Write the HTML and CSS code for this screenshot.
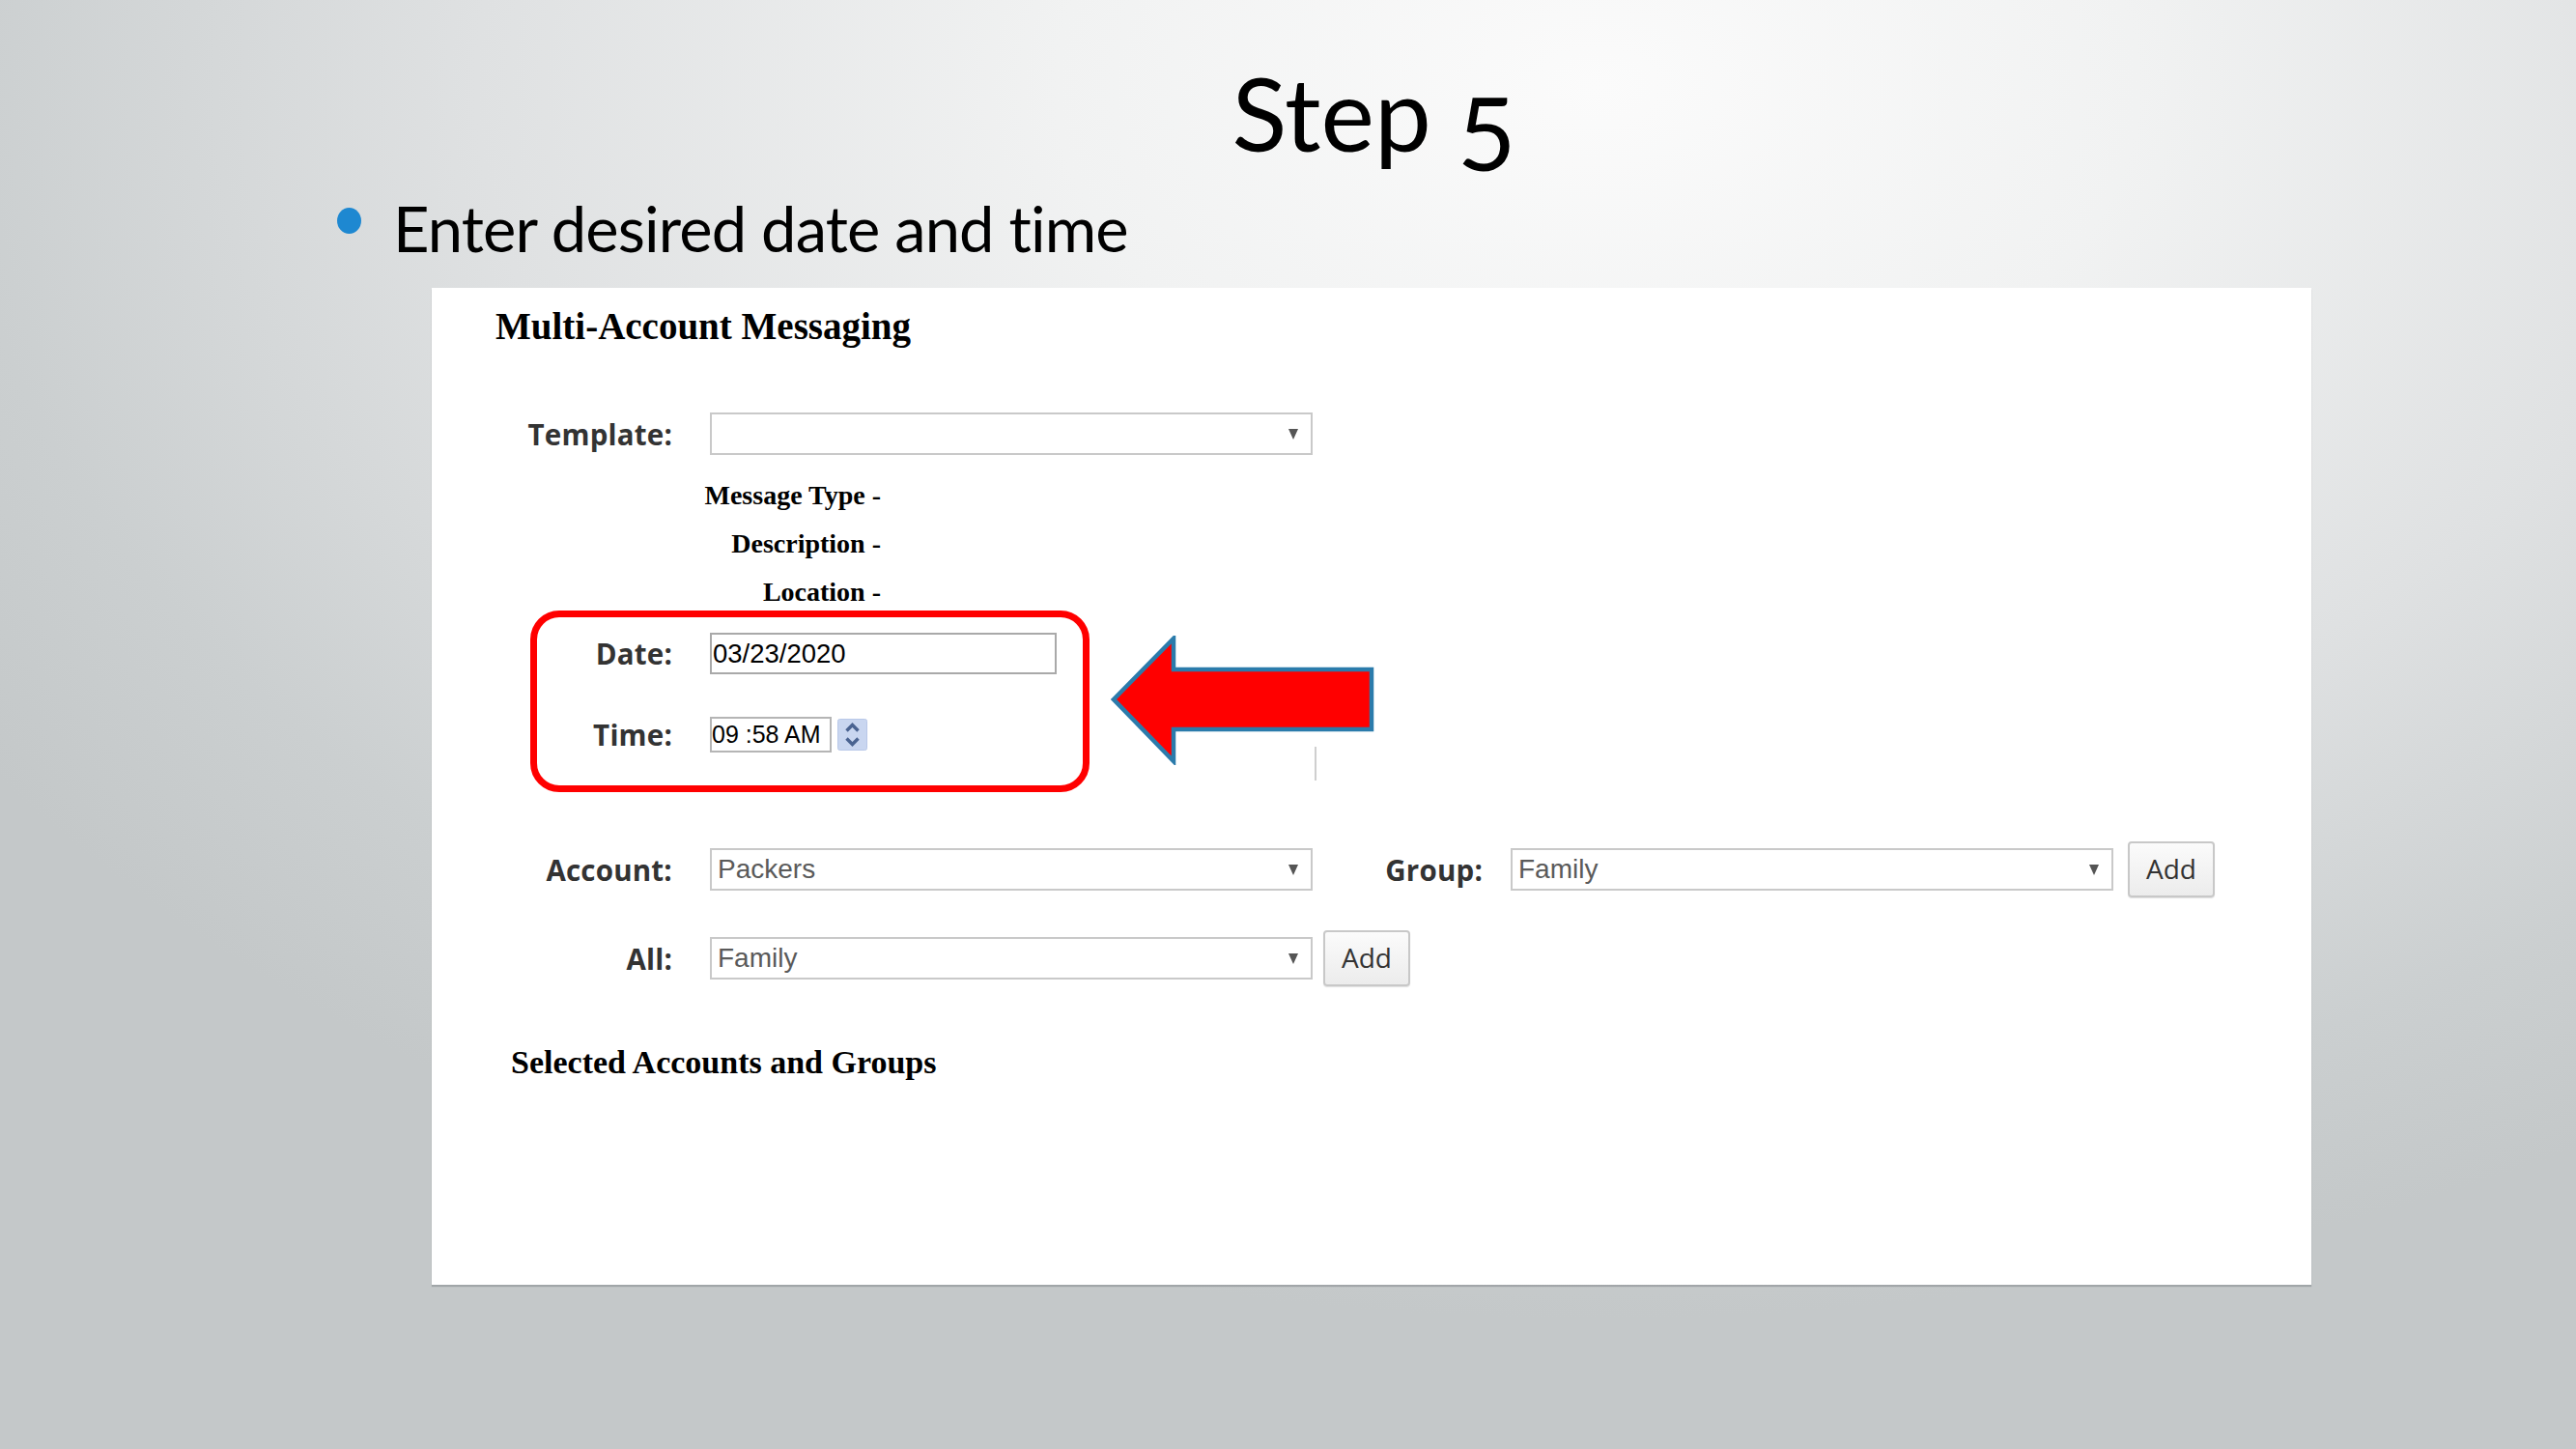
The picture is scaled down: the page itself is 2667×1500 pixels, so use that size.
FILE: index.html
```html
<!DOCTYPE html>
<html lang="en">
<head>
<meta charset="utf-8">
<title>Step 5</title>
<link rel="stylesheet" href="styles.css">
</head>
<body>
<div class="slide">
  <h1 class="title">Step <span class="onum">5</span></h1>
  <ul class="bullets">
    <li>Enter desired date and time</li>
  </ul>
  <div class="panel">
    <h2 class="panel-title">Multi-Account Messaging</h2>
    <div class="form">
      <div class="row row-template">
        <span class="label">Template:</span>
        <div class="select"><span class="select-text"></span><span class="caret"></span></div>
      </div>
      <div class="meta">
        <div>Message Type -</div>
        <div>Description -</div>
        <div>Location -</div>
      </div>
      <div class="row row-date">
        <span class="label">Date:</span>
        <div class="input input-date">03/23/2020</div>
      </div>
      <div class="row row-time">
        <span class="label">Time:</span>
        <div class="input input-time">09 :58 AM</div>
        <svg class="spinner" width="31" height="33" viewBox="0 0 31 33">
          <rect x="0.5" y="0.5" width="30" height="32" rx="2" fill="#c9d6f0" stroke="#b9c8e8"/>
          <path d="M9.5 12.5 L15.5 6.5 L21.5 12.5" fill="none" stroke="#4a6391" stroke-width="3.4" stroke-linejoin="miter"/>
          <path d="M9.5 20.5 L15.5 26.5 L21.5 20.5" fill="none" stroke="#4a6391" stroke-width="3.4" stroke-linejoin="miter"/>
        </svg>
        <span class="vline"></span>
      </div>
      <div class="row row-account">
        <span class="label">Account:</span>
        <div class="select"><span class="select-text">Packers</span><span class="caret"></span></div>
        <span class="label label-group">Group:</span>
        <div class="select select-group"><span class="select-text">Family</span><span class="caret"></span></div>
        <button class="btn btn-group">Add</button>
      </div>
      <div class="row row-all">
        <span class="label">All:</span>
        <div class="select"><span class="select-text">Family</span><span class="caret"></span></div>
        <button class="btn btn-all">Add</button>
      </div>
    </div>
    <h3 class="selected-title">Selected Accounts and Groups</h3>

    <div class="callout"></div>
    <svg class="arrow" width="276" height="134" viewBox="0 0 276 134">
      <polygon points="3,66 65,3 65,35 270,35 270,97 65,97 65,130" fill="#ff0000" stroke="#2b7bab" stroke-width="4.5" stroke-linejoin="miter"/>
    </svg>
  </div>
</div>
</body>
</html>
```

FILE: styles.css
```css
html, body {
  margin: 0;
  padding: 0;
}

body {
  background: #d8dbdc;
}

.slide {
  width: 2667px;
  height: 1500px;
  overflow: hidden;
  box-sizing: border-box;
  padding-top: 64px;
  background:
    radial-gradient(ellipse 75% 85% at 62% 6%, #fbfbfb 0%, #f1f2f2 28%, #dfe1e2 58%, #cbcfd0 85%, #c4c8c9 100%);
  font-family: "Lato", "Open Sans", sans-serif;
}

.title {
  margin: 0;
  height: 105px;
  padding-left: 178px;
  text-align: center;
  font-family: "Lato", sans-serif;
  font-weight: 400;
  font-size: 105px;
  line-height: 1;
  color: #000;
}

.onum {
  vertical-align: -20px;
}

.bullets {
  list-style: none;
  margin: 35px 0 0 0;
  padding: 0 0 0 349px;
}

.bullets li {
  display: flex;
  align-items: flex-start;
  font-family: "Lato", sans-serif;
  font-size: 65px;
  letter-spacing: -0.85px;
  line-height: 1;
  color: #000;
}

.bullets li::before {
  content: "";
  flex: none;
  width: 25px;
  height: 27px;
  margin-top: 11px;
  margin-right: 33px;
  border-radius: 50%;
  background: #1e88d1;
}

.panel {
  position: relative;
  margin: 29px 0 0 447px;
  width: 1946px;
  height: 1032px;
  box-sizing: border-box;
  padding-top: 20px;
  background: #fff;
  box-shadow: 0 2px 1px rgba(120, 125, 128, 0.45);
}

.panel-title {
  margin: 0;
  padding-left: 66px;
  font-family: "Liberation Serif", "Times New Roman", serif;
  font-weight: 700;
  font-size: 39px;
  line-height: 1;
  color: #000;
}

.form {
  margin-top: 70px;
  padding-left: 49px;
}

.row {
  display: flex;
  align-items: center;
}

.label {
  flex: none;
  width: 200px;
  margin-right: 39px;
  text-align: right;
  font-family: "Open Sans", sans-serif;
  font-weight: 700;
  font-size: 29.5px;
  letter-spacing: 0.2px;
  color: #333;
}

.row-template {
  height: 44px;
}

.select {
  flex: none;
  display: flex;
  align-items: center;
  justify-content: space-between;
  width: 624px;
  height: 44px;
  box-sizing: border-box;
  padding: 0 13px 0 6px;
  border: 2px solid #c9c9c9;
  background: #fff;
  font-family: "Liberation Sans", Arial, sans-serif;
  font-size: 28px;
  color: #5a5a5a;
}

.caret {
  flex: none;
  width: 0;
  height: 0;
  border-left: 5px solid transparent;
  border-right: 5px solid transparent;
  border-top: 11px solid #555;
}

.meta {
  margin-top: 17px;
  width: 416px;
  text-align: right;
  font-family: "Liberation Serif", "Times New Roman", serif;
  font-weight: 700;
  font-size: 28px;
  line-height: 50px;
  color: #000;
}

.row-date {
  margin-top: 17px;
  height: 43px;
}

.input {
  flex: none;
  box-sizing: border-box;
  display: flex;
  align-items: center;
  border: 2px solid #a9a9a9;
  background: #fff;
  font-family: "Liberation Sans", Arial, sans-serif;
  color: #000;
}

.input-date {
  width: 359px;
  height: 43px;
  padding-left: 1px;
  font-size: 27.5px;
}

.row-time {
  margin-top: 44px;
  height: 37px;
}

.input-time {
  width: 126px;
  height: 37px;
  padding-left: 0;
  font-size: 25px;
  overflow: hidden;
  white-space: nowrap;
  border-color: #b5b5b5;
}

.spinner {
  flex: none;
  display: block;
  margin-left: 6px;
}

.vline {
  flex: none;
  align-self: flex-start;
  width: 2px;
  height: 35px;
  margin-top: 31px;
  margin-left: 463px;
  background: #cfcfcf;
}

.row-account {
  margin-top: 92px;
  height: 58px;
}

.label-group {
  width: 136px;
  margin-left: 40px;
  margin-right: 29px;
}

.btn {
  flex: none;
  width: 90px;
  height: 58px;
  padding: 0 0 2px 0;
  box-sizing: border-box;
  border: 2px solid #c8c8c8;
  border-radius: 4px;
  background: linear-gradient(#fbfbfb, #ececec);
  box-shadow: 0 1px 1px rgba(0, 0, 0, 0.12);
  font-family: "Open Sans", sans-serif;
  font-size: 28px;
  color: #333;
}

.btn-group {
  margin-left: 15px;
}

.btn-all {
  margin-left: 11px;
}

.row-all {
  margin-top: 34px;
  height: 58px;
}

.selected-title {
  margin: 62px 0 0 0;
  padding-left: 82px;
  font-family: "Liberation Serif", "Times New Roman", serif;
  font-weight: 700;
  font-size: 34px;
  line-height: 1;
  color: #000;
}

.callout {
  position: absolute;
  left: 102px;
  top: 334px;
  width: 579px;
  height: 188px;
  box-sizing: border-box;
  border: 7px solid #ff0000;
  border-radius: 30px;
}

.arrow {
  position: absolute;
  left: 703px;
  top: 360px;
  display: block;
}
```
